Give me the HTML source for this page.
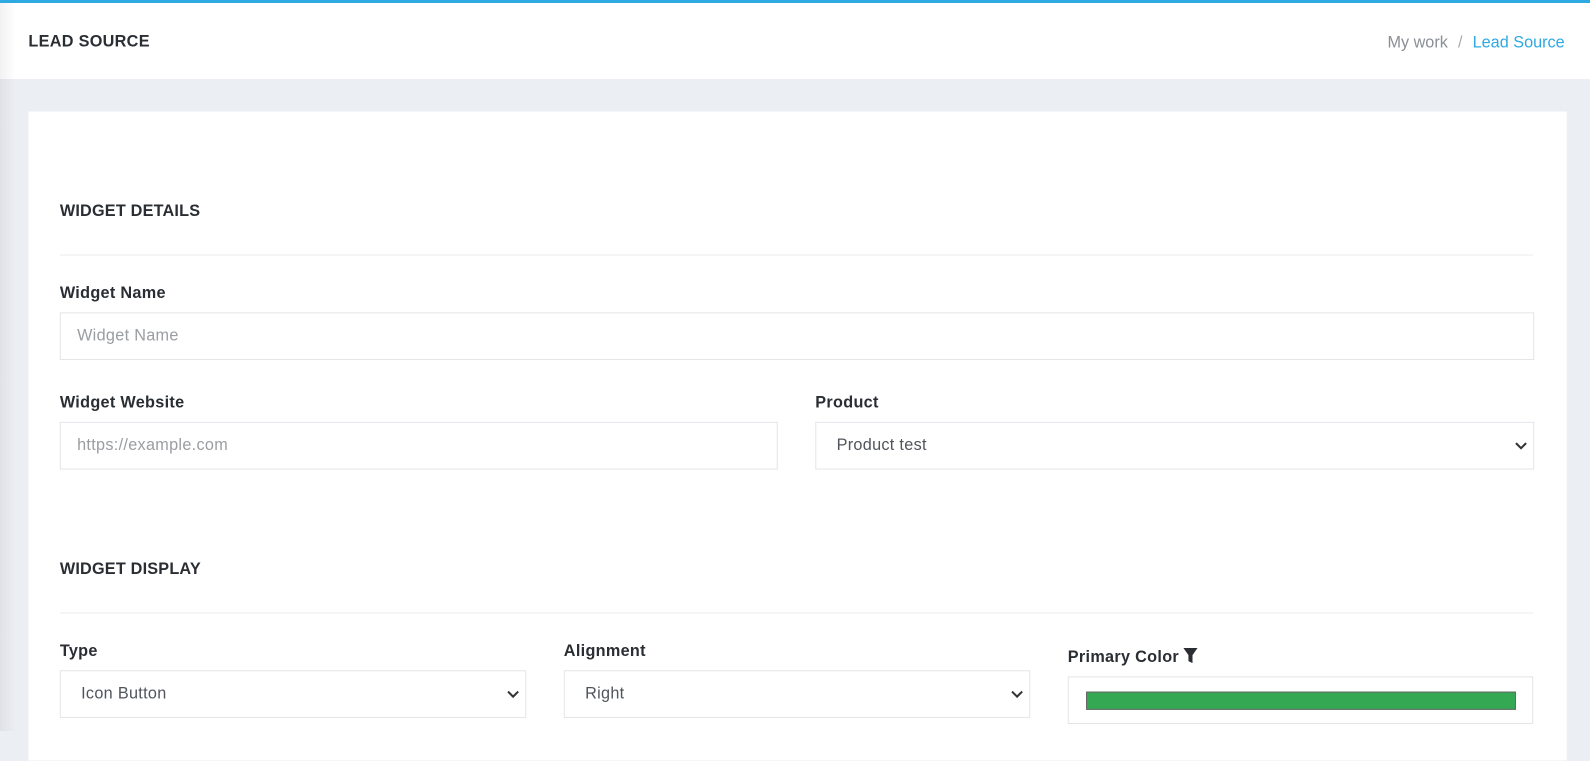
<!DOCTYPE html>
<html><head><meta charset="utf-8"><style>
*{box-sizing:border-box;margin:0;padding:0}
body{width:1590px;height:731px;overflow:hidden;background:#ebeef3;font-family:"Liberation Sans",sans-serif;position:relative}
#w{position:absolute;left:0;top:0;width:1568px;height:721px;transform:scale(1.01403);transform-origin:0 0}
.top{position:absolute;left:0;top:0;width:1590px;height:3px;background:#2fa9e2}
.hdr{position:absolute;left:0;top:3px;width:1590px;height:76px;background:#fff}
.shadow{position:absolute;left:0;top:3px;width:16px;height:728px;background:linear-gradient(to right,rgba(0,0,0,0.05),rgba(0,0,0,0))}
.title{position:absolute;left:28px;top:33px;font-size:16px;font-weight:bold;color:#2a2e33;letter-spacing:0.3px}
.bc{position:absolute;right:25px;top:34px;font-size:16px;color:#8a8f96}
.bc span{color:#2fa9e2}
.bc i{font-style:normal;margin:0 10px;color:#aaa}
.card{position:absolute;left:28px;top:110px;width:1517px;height:640px;background:#fff}
.h{position:absolute;left:59px;font-size:16px;font-weight:bold;color:#2a2e33;letter-spacing:0.2px}
.hr{position:absolute;left:59px;width:1453px;height:1px;background:#e9ecef}
.lbl{position:absolute;font-size:16px;font-weight:bold;color:#2a2e33;letter-spacing:0.3px}
.in{position:absolute;height:47px;border:1px solid #e3e5e8;background:#fff;font-size:16px;color:#9a9da1;padding:0 0 0 16px;line-height:45px;letter-spacing:0.3px}
.sel{color:#50555b;padding-left:20px}
.sel svg{position:absolute;right:6px;top:18px}
</style></head><body>
<div class="top"></div><div class="hdr"></div>
<div id="w">
<div class="title">LEAD SOURCE</div>
<div class="bc">My work<i>/</i><span>Lead Source</span></div>
<div class="card"></div>
<div class="h" style="top:200px">WIDGET DETAILS</div>
<div class="hr" style="top:251px"></div>
<div class="lbl" style="left:59px;top:281px">Widget Name</div>
<div class="in" style="left:59px;top:308px;width:1454px">Widget Name</div>
<div class="lbl" style="left:59px;top:389px">Widget Website</div>
<div class="in" style="left:59px;top:416px;width:708px">https://example.com</div>
<div class="lbl" style="left:804px;top:389px">Product</div>
<div class="in sel" style="left:804px;top:416px;width:709px">Product test<svg width="12" height="9" viewBox="0 0 12 9"><path d="M1 2l5 5 5-5" fill="none" stroke="#333" stroke-width="2"/></svg></div>
<div class="h" style="top:553px">WIDGET DISPLAY</div>
<div class="hr" style="top:604px"></div>
<div class="lbl" style="left:59px;top:634px">Type</div>
<div class="in sel" style="left:59px;top:661px;width:460px">Icon Button<svg width="12" height="9" viewBox="0 0 12 9"><path d="M1 2l5 5 5-5" fill="none" stroke="#333" stroke-width="2"/></svg></div>
<div class="lbl" style="left:556px;top:634px">Alignment</div>
<div class="in sel" style="left:556px;top:661px;width:460px">Right<svg width="12" height="9" viewBox="0 0 12 9"><path d="M1 2l5 5 5-5" fill="none" stroke="#333" stroke-width="2"/></svg></div>
<div class="lbl" style="left:1053px;top:639px">Primary Color <svg width="14" height="15" viewBox="0 0 14 15" style="vertical-align:-1px"><path d="M0 0h14l-5 7v8l-4-2V7z" fill="#2a2e33"/></svg></div>
<div class="in" style="left:1053px;top:667px;width:459px;padding:0">
<div style="position:absolute;left:17px;top:14px;width:424px;height:18px;background:#34a853;border:1px solid #666"></div></div>
</div>
<div class="shadow"></div>
</body></html>
